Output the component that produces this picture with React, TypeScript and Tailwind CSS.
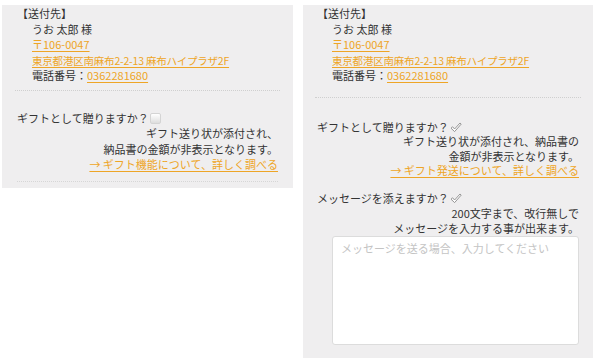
import React from 'react';

// Gift / shipping confirmation panels (two states side by side)

const ORANGE = 'text-[#eea526] underline decoration-[#eea526] underline-offset-2';

const Address: React.FC<{ lineGap: string }> = ({ lineGap }) => (
  <div className="leading-[15.5px]">
    <div>【送付先】</div>
    <div className="ml-[15px]">
      <div>うお 太郎 様</div>
      <div className={ORANGE}>〒106-0047</div>
      <div className={`${ORANGE} text-[10.5px] tracking-[-0.2px]`}>東京都港区南麻布2-2-13 麻布ハイプラザ2F</div>
      <div>
        電話番号：<span className={ORANGE}>0362281680</span>
      </div>
    </div>
    <div className={`${lineGap} border-b border-dotted border-[#cfcfcf] mr-[-2px] ml-[-2px]`} />
  </div>
);

const EmptyBox: React.FC = () => (
  <span className="inline-block align-[-1px] w-[11px] h-[11px] ml-[1px] rounded-[2px] border border-[#d4d4d4] bg-gradient-to-b from-white to-[#dedede]" />
);

const Checked: React.FC = () => (
  <svg width="12" height="11" viewBox="0 0 12 11" className="inline-block align-[-1px] ml-[1px]">
    <path
      d="M1 6.2 L2.6 4.8 L4.6 7 L10 1 L11.2 2.1 L4.6 9.6 Z"
      fill="#ffffff"
      stroke="#8a8a8a"
      strokeWidth="0.9"
      strokeLinejoin="round"
    />
  </svg>
);

export default function App() {
  return (
    <div
      className="w-[600px] h-[364px] bg-white flex items-start gap-[10px] pl-[2px] pt-[5px] text-[11px] text-[#333333]"
      style={{ fontFamily: '"Noto Sans CJK JP", "Noto Sans", sans-serif' }}
    >
      {/* Left: gift not selected */}
      <div className="w-[291px] bg-[#efeeef] pl-[15px] pr-[15px] pt-[1px] pb-[6px]">
        <Address lineGap="mt-[6px]" />
        <div className="mt-[20px] leading-[15.5px]">
          <div>
            ギフトとして贈りますか？<EmptyBox />
          </div>
          <div className="text-right">ギフト送り状が添付され、</div>
          <div className="text-right">納品書の金額が非表示となります。</div>
          <div className="text-right">
            <span className={ORANGE}>→ ギフト機能について、詳しく調べる</span>
          </div>
        </div>
        <div className="mt-[8px] border-b border-dotted border-[#d6d6d6]" />
      </div>

      {/* Right: gift + message selected */}
      <div className="w-[290px] bg-[#efeeef] pl-[14px] pr-[14px] pt-[1px] pb-[13px]">
        <Address lineGap="mt-[13px]" />
        <div className="mt-[22px] leading-[14.5px]">
          <div>
            ギフトとして贈りますか？<Checked />
          </div>
          <div className="text-right">ギフト送り状が添付され、納品書の</div>
          <div className="text-right">金額が非表示となります。</div>
          <div className="text-right">
            <span className={ORANGE}>→ ギフト発送について、詳しく調べる</span>
          </div>
        </div>
        <div className="mt-[13px] leading-[15px]">
          <div>
            メッセージを添えますか？<Checked />
          </div>
          <div className="text-right">200文字まで、改行無しで</div>
          <div className="text-right">メッセージを入力する事が出来ます。</div>
        </div>
        <textarea
          className="block mt-0 ml-[15px] w-[247px] h-[109px] resize-none rounded-[3px] border border-[#dcdcdc] bg-white px-[8px] py-[3px] text-[11px] leading-[16px] outline-none placeholder:text-[#c4c4c4]"
          style={{ fontFamily: '"Noto Sans CJK JP", "Noto Sans", sans-serif' }}
          placeholder="メッセージを送る場合、入力してください"
        />
      </div>
    </div>
  );
}
